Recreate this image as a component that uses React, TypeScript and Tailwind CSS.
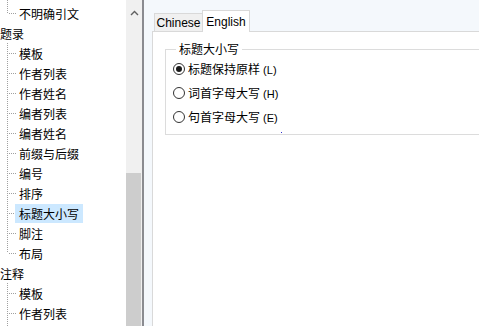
import React from "react";

type Row = { label: string; level: 0 | 1; last?: boolean; first?: boolean; selected?: boolean };

const rows: Row[] = [
  { label: "不明确引文", level: 1, last: true, first: true },
  { label: "题录", level: 0 },
  { label: "模板", level: 1 },
  { label: "作者列表", level: 1 },
  { label: "作者姓名", level: 1 },
  { label: "编者列表", level: 1 },
  { label: "编者姓名", level: 1 },
  { label: "前缀与后缀", level: 1 },
  { label: "编号", level: 1 },
  { label: "排序", level: 1 },
  { label: "标题大小写", level: 1, selected: true },
  { label: "脚注", level: 1 },
  { label: "布局", level: 1, last: true },
  { label: "注释", level: 0 },
  { label: "模板", level: 1 },
  { label: "作者列表", level: 1 },
];

const cjk = "font-['Microsoft_YaHei','Noto_Sans_CJK_SC',sans-serif]";
const ui = "font-['Segoe_UI','Liberation_Sans','Noto_Sans_CJK_SC',sans-serif]";

function Connector({ last, first }: { last?: boolean; first?: boolean }) {
  return (
    <svg width="15" height="20" className="shrink-0 overflow-visible">
      <line
        x1="7.5"
        y1={first ? -3 : 0}
        x2="7.5"
        y2={last ? 10 : 20}
        stroke="#a0a0a0"
        strokeWidth="1"
        strokeDasharray="1 1"
      />
      <line x1="9" y1="10.5" x2="16" y2="10.5" stroke="#a0a0a0" strokeWidth="1" strokeDasharray="1 1" />
    </svg>
  );
}

function TreeRow({ row }: { row: Row }) {
  return (
    <div className="flex h-[20px] items-center">
      {row.level === 1 && <Connector last={row.last} first={row.first} />}
      <span
        className={`${cjk} whitespace-nowrap text-[12px] leading-[19px] text-black ${
          row.level === 1 ? "px-[4px]" : "pr-[4px]"
        } ${row.selected ? "bg-[#cce8ff]" : ""}`}
      >
        {row.label}
      </span>
    </div>
  );
}

function Radio({ checked, label, hotkey }: { checked?: boolean; label: string; hotkey: string }) {
  return (
    <div className="flex h-[24px] items-center gap-[3px]">
      <span className="flex h-[12px] w-[12px] items-center justify-center rounded-full border border-[#333333] bg-white">
        {checked && <span className="h-[6px] w-[6px] rounded-full bg-[#1a1a1a]" />}
      </span>
      <span className={`${cjk} text-[12px] leading-[16px] text-black`}>
        {label}
        <span className={`${ui} text-[11px]`}> ({hotkey})</span>
      </span>
    </div>
  );
}

export default function App() {
  return (
    <div className="flex h-[326px] w-[479px] overflow-hidden bg-white">
      {/* Tree view */}
      <div className="flex w-[144px] shrink-0 border-r-2 border-[#8a8b90]">
        <div className="w-[126px] overflow-hidden pt-[3px]">
          {rows.map((r, i) => (
            <TreeRow key={i} row={r} />
          ))}
          <div className="h-[10px] w-[15px]">
            <svg width="15" height="10">
              <line x1="7.5" y1="0" x2="7.5" y2="10" stroke="#a0a0a0" strokeWidth="1" strokeDasharray="1 1" />
            </svg>
          </div>
        </div>
        <div className="flex w-[16px] flex-col bg-[#f0f0f0]">
          <div className="flex h-[17px] items-center justify-center pt-[8px]">
            <svg width="9" height="6" viewBox="0 0 9 6">
              <path d="M1 5 L4.5 1.5 L8 5" fill="none" stroke="#606060" strokeWidth="1.4" />
            </svg>
          </div>
          <div className="h-[156px]" />
          <div className="w-[15px] flex-1 bg-[#cdcdcd]" />
        </div>
      </div>

      {/* Right side */}
      <div className="flex flex-1 flex-col bg-[#f4f8fc] pl-[8px] pt-[10px]">
        <div className="flex h-[21px] items-end pl-[2px]">
          <div
            className={`${ui} flex h-[18px] w-[48px] items-center justify-center border-l border-t border-[#d9d9d9] bg-[#f0f0f0] text-[12px] text-black`}
          >
            Chinese
          </div>
          <div
            className={`${ui} relative z-10 -mb-px flex h-[22px] w-[48px] items-start justify-center border-x border-t border-[#d9d9d9] bg-white pt-[2px] text-[12px] text-black`}
          >
            English
          </div>
        </div>
        <div className="w-[400px] flex-1 border-l border-t border-[#d9d9d9] bg-white pl-[12px] pt-[9px]">
          <fieldset className="w-[340px] border border-[#dcdcdc] pb-[5px] pl-[7px]">
            <legend className={`${cjk} ml-[3px] px-[3px] text-[12px] leading-[16px] text-black`}>
              标题大小写
            </legend>
            <div className="relative">
              <Radio checked label="标题保持原样" hotkey="L" />
              <Radio label="词首字母大写" hotkey="H" />
              <Radio label="句首字母大写" hotkey="E" />
              <span className="absolute left-[108px] top-[75px] h-[1px] w-[1px] bg-[#3030d0]" />
            </div>
          </fieldset>
        </div>
      </div>
    </div>
  );
}
